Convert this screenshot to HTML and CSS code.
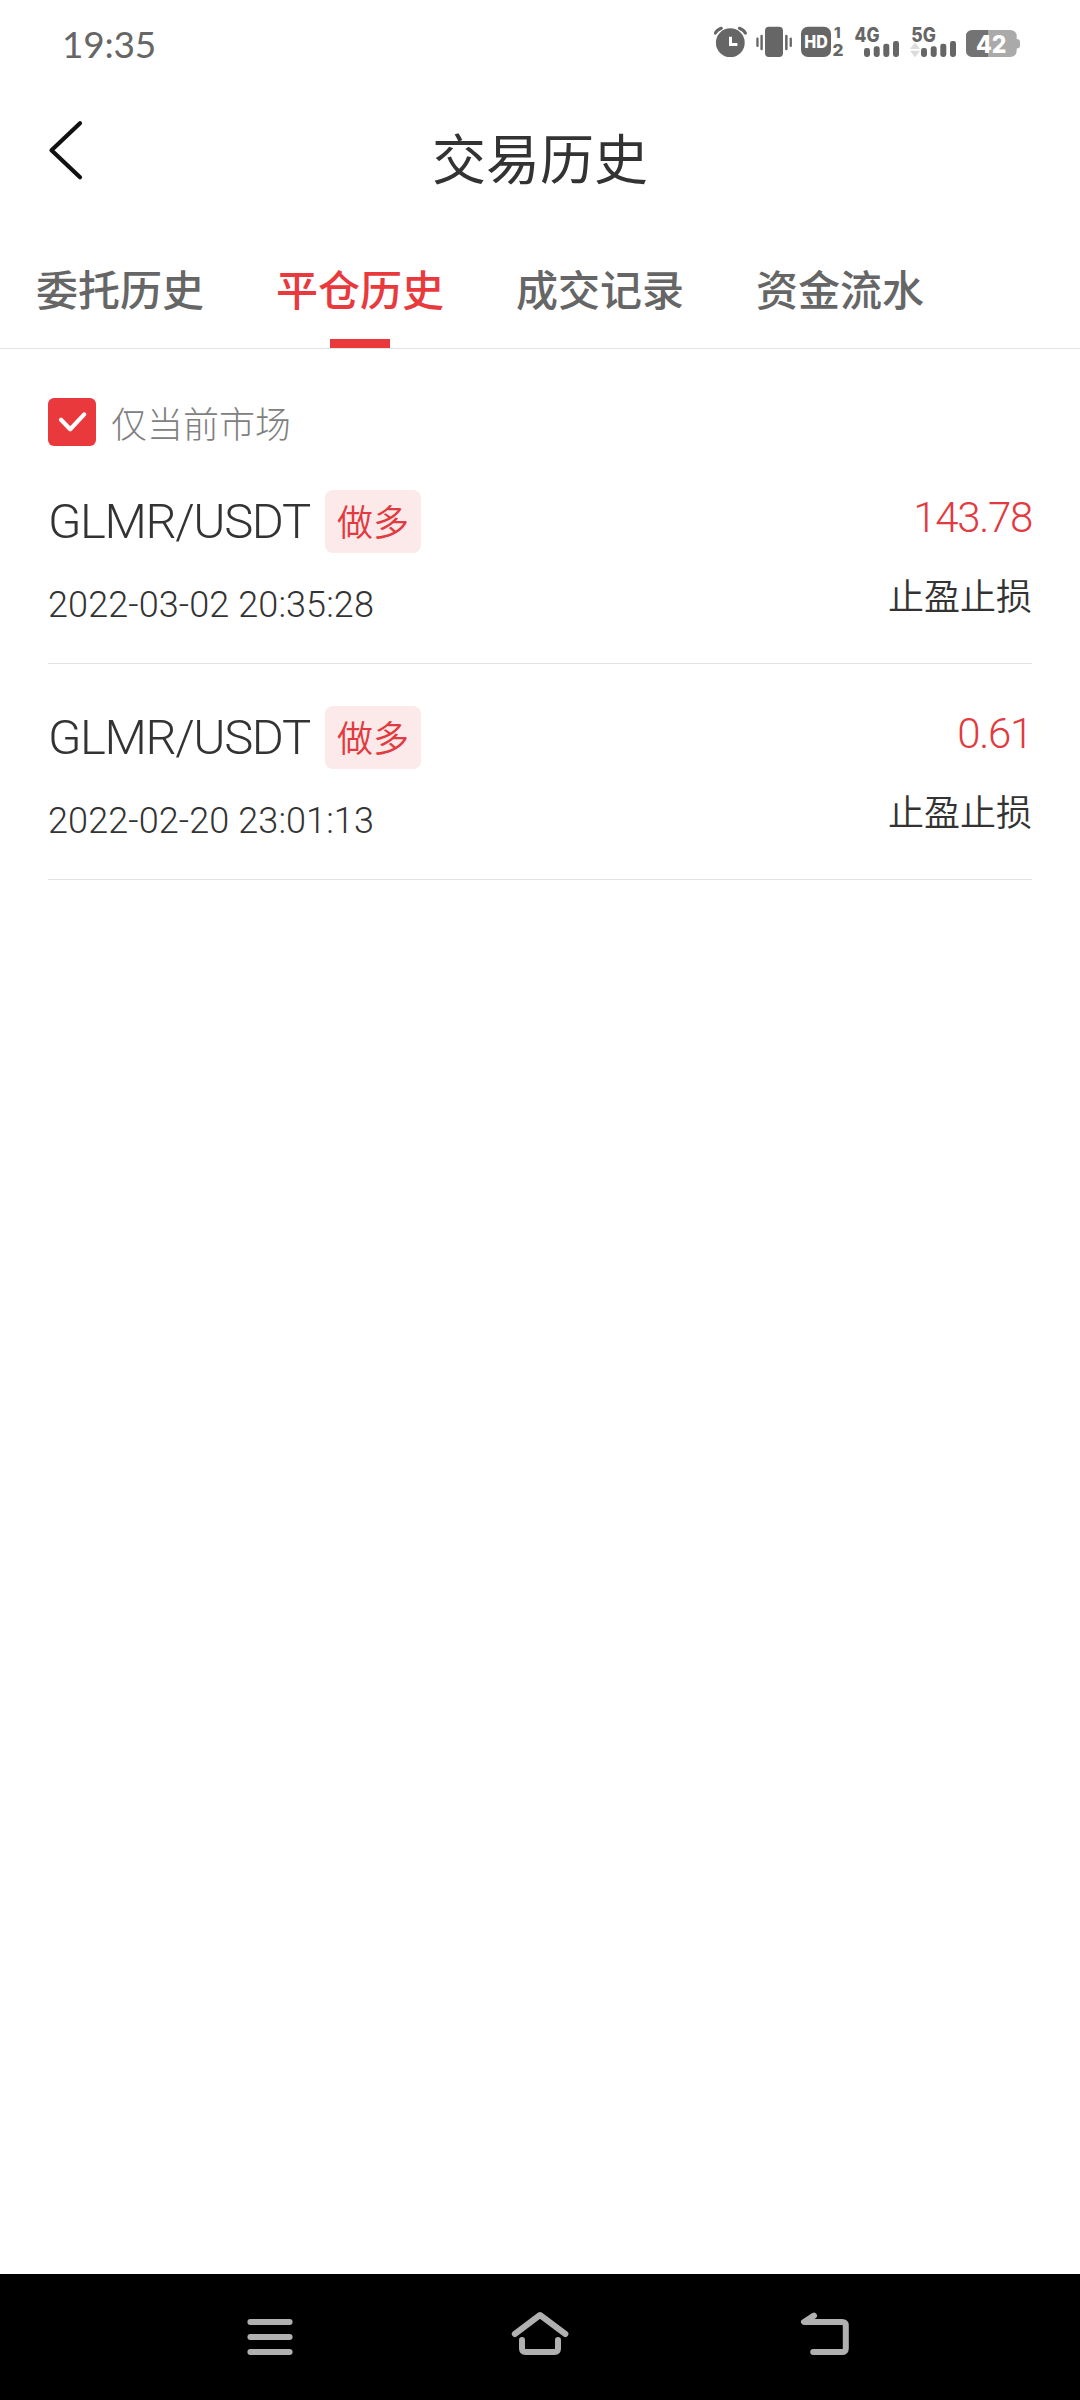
FILE: index.html
```html
<!DOCTYPE html>
<html lang="zh-CN">
<head>
<meta charset="utf-8">
<title>交易历史</title>
<link rel="stylesheet" href="styles.css">
</head>
<body>
<div class="screen">
  <div class="status">
    <span class="clock">19:35</span>
    <div class="status-icons">
      <svg width="38" height="54" viewBox="714 15 38 54">
        <circle cx="730.3" cy="42.7" r="14.4" fill="#666"/>
        <path d="M715.3 33.2Q717 29.6 721.3 28.2M739.4 28.2Q743.7 29.6 745.4 33.2" fill="none" stroke="#666" stroke-width="3" stroke-linecap="round"/>
        <path d="M730.5 36.7V44.6H737.4" fill="none" stroke="#fff" stroke-width="3"/>
      </svg>
      <svg width="46" height="54" viewBox="752 15 46 54" fill="#666">
        <rect x="765" y="26.7" width="18" height="30.3" rx="4"/>
        <rect x="760.4" y="34.7" width="2.4" height="15.6" rx="1.2"/>
        <rect x="756.3" y="37.5" width="2.3" height="9.6" rx="1.1"/>
        <rect x="785.1" y="34.7" width="2.5" height="15.6" rx="1.2"/>
        <rect x="789.6" y="37.5" width="2.3" height="9.6" rx="1.1"/>
      </svg>
      <svg class="glyphs" width="52" height="54" viewBox="798 15 52 54" fill="#666">
        <rect x="801" y="26.7" width="30" height="30.3" rx="7"/>
        <text x="804.2" y="48" font-size="17" textLength="23.5" lengthAdjust="spacingAndGlyphs" fill="#fff">HD</text>
        <text x="834" y="38" font-size="15">1</text>
        <text x="832.5" y="56.2" font-size="16" textLength="11" lengthAdjust="spacingAndGlyphs">2</text>
      </svg>
      <svg class="glyphs" width="55" height="54" viewBox="850 15 55 54" fill="#666">
        <text x="854.5" y="41.5" font-size="19.5" textLength="25" lengthAdjust="spacingAndGlyphs">4G</text>
        <rect x="864" y="48" width="6" height="9" rx="2.4"/>
        <rect x="873.7" y="46.3" width="6" height="10.7" rx="2.4"/>
        <rect x="883.3" y="43.7" width="6" height="13.3" rx="2.4"/>
        <rect x="893" y="41" width="6" height="16" rx="2.4"/>
      </svg>
      <svg class="glyphs" width="55" height="54" viewBox="905 15 55 54" fill="#666">
        <text x="911.3" y="41.5" font-size="19.5" textLength="24.5" lengthAdjust="spacingAndGlyphs">5G</text>
        <path d="M910 49L914.2 43.4Q915 42.6 915.8 43.4L920 49ZM910 50.8L914.2 56.4Q915 57.2 915.8 56.4L920 50.8Z" fill="#dcdcdc"/>
        <rect x="921" y="48" width="6" height="9" rx="2.4"/>
        <rect x="930.7" y="46.3" width="6" height="10.7" rx="2.4"/>
        <rect x="940.3" y="43.7" width="6" height="13.3" rx="2.4"/>
        <rect x="950" y="41" width="6" height="16" rx="2.4"/>
      </svg>
      <svg class="glyphs" width="64" height="54" viewBox="960 15 64 54">
        <path d="M973 30H1010Q1016.7 30 1016.7 36.5V39Q1020 39 1020 42V45.5Q1020 48.5 1016.7 48.5V50.5Q1016.7 57 1010 57H973Q966 57 966 50.5V36.5Q966 30 973 30Z" fill="#aaa"/>
        <path d="M988 30H973Q966 30 966 36.5V50.5Q966 57 973 57H988Z" fill="#737373"/>
        <text x="976" y="53" font-size="24.5" textLength="30.5" lengthAdjust="spacingAndGlyphs" fill="#fff">42</text>
      </svg>
    </div>
  </div>

  <header class="header">
    <svg class="back" width="40" height="64" viewBox="46 118 40 64">
      <path d="M80 123.3L51.5 150.3L80 177.2" fill="none" stroke="#111" stroke-width="4.2" stroke-linecap="round" stroke-linejoin="round"/>
    </svg>
    <h1 class="title">交易历史</h1>
  </header>

  <nav class="tabs">
    <span class="tab">委托历史</span>
    <span class="tab tab-active">平仓历史</span>
    <span class="tab">成交记录</span>
    <span class="tab">资金流水</span>
  </nav>

  <label class="filter">
    <svg width="48" height="48" viewBox="0 0 48 48">
      <rect width="48" height="48" rx="6" fill="#e9393d"/>
      <path d="M13 21.8L22.2 31.2L36.2 16.4" fill="none" stroke="#fff" stroke-width="4.2" stroke-linecap="round" stroke-linejoin="round"/>
    </svg>
    <span class="filter-label">仅当前市场</span>
  </label>

  <main class="list">
    <article class="record">
      <div class="left">
        <div class="pair"><span class="symbol">GLMR/USDT</span><span class="badge">做多</span></div>
        <div class="date">2022-03-02 20:35:28</div>
      </div>
      <div class="right">
        <div class="amount">143.78</div>
        <div class="reason">止盈止损</div>
      </div>
    </article>
    <article class="record">
      <div class="left">
        <div class="pair"><span class="symbol">GLMR/USDT</span><span class="badge">做多</span></div>
        <div class="date">2022-02-20 23:01:13</div>
      </div>
      <div class="right">
        <div class="amount">0.61</div>
        <div class="reason">止盈止损</div>
      </div>
    </article>
  </main>

  <footer class="navbar">
    <svg width="80" height="60" viewBox="230 2304 80 60">
      <path d="M250.4 2322H289.6M250.4 2337H289.6M250.4 2352H289.6" stroke="#b0b0b0" stroke-width="6" stroke-linecap="round"/>
    </svg>
    <svg width="80" height="60" viewBox="500 2304 80 60" fill="none" stroke="#b0b0b0" stroke-linecap="round" stroke-linejoin="round">
      <path d="M514.8 2334L540 2315L565.4 2334" stroke-width="6"/>
      <path d="M522 2340V2348.5Q522 2352 525.5 2352H554.5Q558 2352 558 2348.5V2340" stroke-width="6"/>
    </svg>
    <svg width="80" height="60" viewBox="770 2304 80 60" fill="none" stroke="#b0b0b0" stroke-linecap="round" stroke-linejoin="round">
      <path d="M814 2315.6L804 2322H842Q845.8 2322 845.8 2325.6V2348.4Q845.8 2352 842 2352H813.2" stroke-width="6"/>
    </svg>
  </footer>
</div>
</body>
</html>
```
FILE: styles.css
```css
* {
  box-sizing: border-box;
}

body {
  margin: 0;
  background: #fff;
  color: #333;
  font-family: Roboto, "Noto Sans CJK SC", sans-serif;
}

.screen {
  display: flex;
  flex-direction: column;
  width: 1080px;
  height: 2400px;
}

.status {
  display: flex;
  justify-content: space-between;
  height: 84px;
  padding: 0 56px 0 62px;
}

.clock {
  padding-top: 22px;
  font: 400 37px/44px Lato, sans-serif;
  letter-spacing: -0.2px;
  color: #666;
}

.status-icons {
  display: flex;
  padding-top: 15px;
}

.glyphs {
  font-family: Inter, sans-serif;
  font-weight: 800;
}

.header {
  display: grid;
  grid-template-columns: 86px 1fr 86px;
  height: 150px;
}

.back {
  margin: 34px 0 0 46px;
}

.title {
  margin: 38px 0 0;
  font-size: 54px;
  font-weight: 400;
  line-height: 80px;
  text-align: center;
}

.tabs {
  display: flex;
  gap: 72px;
  height: 115px;
  padding: 0 36px;
  border-bottom: 1px solid #e2e2e2;
}

.tab {
  display: flex;
  flex-direction: column;
  justify-content: space-between;
  align-items: center;
  padding-top: 27px;
  font-size: 42px;
  font-weight: 500;
  line-height: 62px;
  color: #666;
}

.tab-active {
  color: #e9393d;
}

.tab-active::after {
  content: "";
  width: 60px;
  height: 9px;
  background: #e9393d;
}

.filter {
  display: flex;
  gap: 15px;
  height: 99px;
  padding: 49px 48px 0;
}

svg {
  flex: none;
}

.filter-label {
  padding-top: 1px;
  font-size: 36px;
  font-weight: 300;
  line-height: 54px;
  color: #808080;
}

.list {
  flex: 1;
  padding: 0 48px;
}

.record {
  display: flex;
  justify-content: space-between;
  height: 216px;
  padding-top: 42px;
  border-bottom: 1px solid #e2e2e2;
}

.pair {
  display: flex;
  align-items: center;
  gap: 14px;
  height: 63px;
}

.symbol {
  width: 263px;
  font-size: 49px;
  font-weight: 350;
  letter-spacing: -1.4px;
  white-space: nowrap;
}

.badge {
  width: 96px;
  height: 63px;
  border-radius: 8px;
  background: #fceaea;
  color: #e23a40;
  font-size: 36px;
  font-weight: 350;
  line-height: 68px;
  text-align: center;
}

.date {
  margin-top: 31px;
  font-size: 36px;
  font-weight: 350;
  line-height: 42px;
  letter-spacing: 0.1px;
}

.right {
  text-align: right;
}

.amount {
  padding-top: 3px;
  color: #e23a40;
  font-size: 42px;
  font-weight: 350;
  line-height: 50px;
  letter-spacing: -1.3px;
}

.reason {
  margin-top: 28px;
  font-size: 36px;
  font-weight: 350;
  line-height: 54px;
}

.navbar {
  display: flex;
  justify-content: space-between;
  height: 126px;
  padding: 30px 230px 0;
  background: #000;
}
```
